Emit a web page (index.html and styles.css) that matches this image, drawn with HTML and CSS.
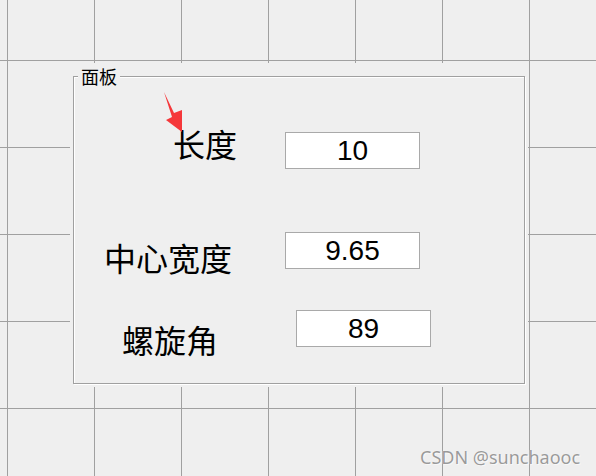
FILE: index.html
```html
<!DOCTYPE html>
<html lang="zh">
<head>
<meta charset="utf-8">
<title>面板</title>
<link rel="stylesheet" href="styles.css">
</head>
<body>
<div class="cover">
  <div class="group">
    <span class="group-title">面板</span>
    <div class="row row-1">
      <span class="label">长度</span>
      <div class="field">10</div>
    </div>
    <div class="row row-2">
      <span class="label">中心宽度</span>
      <div class="field">9.65</div>
    </div>
    <div class="row row-3">
      <span class="label">螺旋角</span>
      <div class="field">89</div>
    </div>
  </div>
</div>
<svg class="arrow" width="26" height="48" viewBox="0 0 26 48">
  <polygon points="4,4 14,25 22,22 22,44 6,32 12,29" fill="#f5373a"/>
</svg>
<div class="watermark">CSDN @sunchaooc</div>
</body>
</html>
```

FILE: styles.css
```css
html, body {
  margin: 0;
  padding: 0;
}
body {
  width: 596px;
  height: 476px;
  overflow: hidden;
  background-color: #efefef;
  background-image:
    linear-gradient(to right, #a0a0a0 1px, transparent 1px),
    linear-gradient(to bottom, #a0a0a0 1px, transparent 1px);
  background-size: 87px 87px;
  background-position: 7px 60px;
  font-family: "Noto Sans CJK SC", "Noto Sans", sans-serif;
  color: #000;
}
.cover {
  margin-left: 71px;
  padding-top: 63px;
  width: 456px;
}
.group {
  position: relative;
  box-sizing: border-box;
  margin-left: 2px;
  margin-top: 13px;
  width: 452px;
  height: 308px;
  border: 1px solid #a0a0a0;
  box-shadow: 1px 1px 0 #ffffff, inset 1px 1px 0 #ffffff, 0 0 0 3px #efefef, 0 -10px 0 3px #efefef;
  background: #efefef;
}
.group-title {
  position: absolute;
  left: 4px;
  top: -10px;
  padding: 0 3px;
  background: #efefef;
  font-size: 18px;
  line-height: 18px;
}
.row {
  display: flex;
  align-items: flex-start;
}
.label {
  display: block;
  font-size: 32px;
  line-height: 32px;
  white-space: nowrap;
}
.field {
  box-sizing: border-box;
  width: 135px;
  height: 37px;
  border: 1px solid #a9a9a9;
  background: #ffffff;
  font-family: "Liberation Sans", Arial, sans-serif;
  font-size: 28px;
  line-height: 35px;
  text-align: center;
}
.row-1 {
  margin-top: 50px;
  padding-left: 99px;
}
.row-1 .label {
  width: 112px;
}
.row-1 .field {
  margin-top: 5px;
}
.row-2 {
  margin-top: 63px;
  padding-left: 30px;
}
.row-2 .label {
  width: 181px;
  margin-top: 9px;
}
.row-3 {
  margin-top: 37px;
  padding-left: 48px;
}
.row-3 .label {
  width: 174px;
  margin-top: 13px;
}
.arrow {
  position: absolute;
  left: 160px;
  top: 88px;
}
.watermark {
  position: absolute;
  left: 420px;
  top: 446px;
  font-family: "Noto Sans", sans-serif;
  font-size: 18px;
  line-height: 22px;
  color: #9a9a9a;
  text-shadow: 0 0 1px #ffffff, 1px 1px 0 #f8f8f8;
}
```
